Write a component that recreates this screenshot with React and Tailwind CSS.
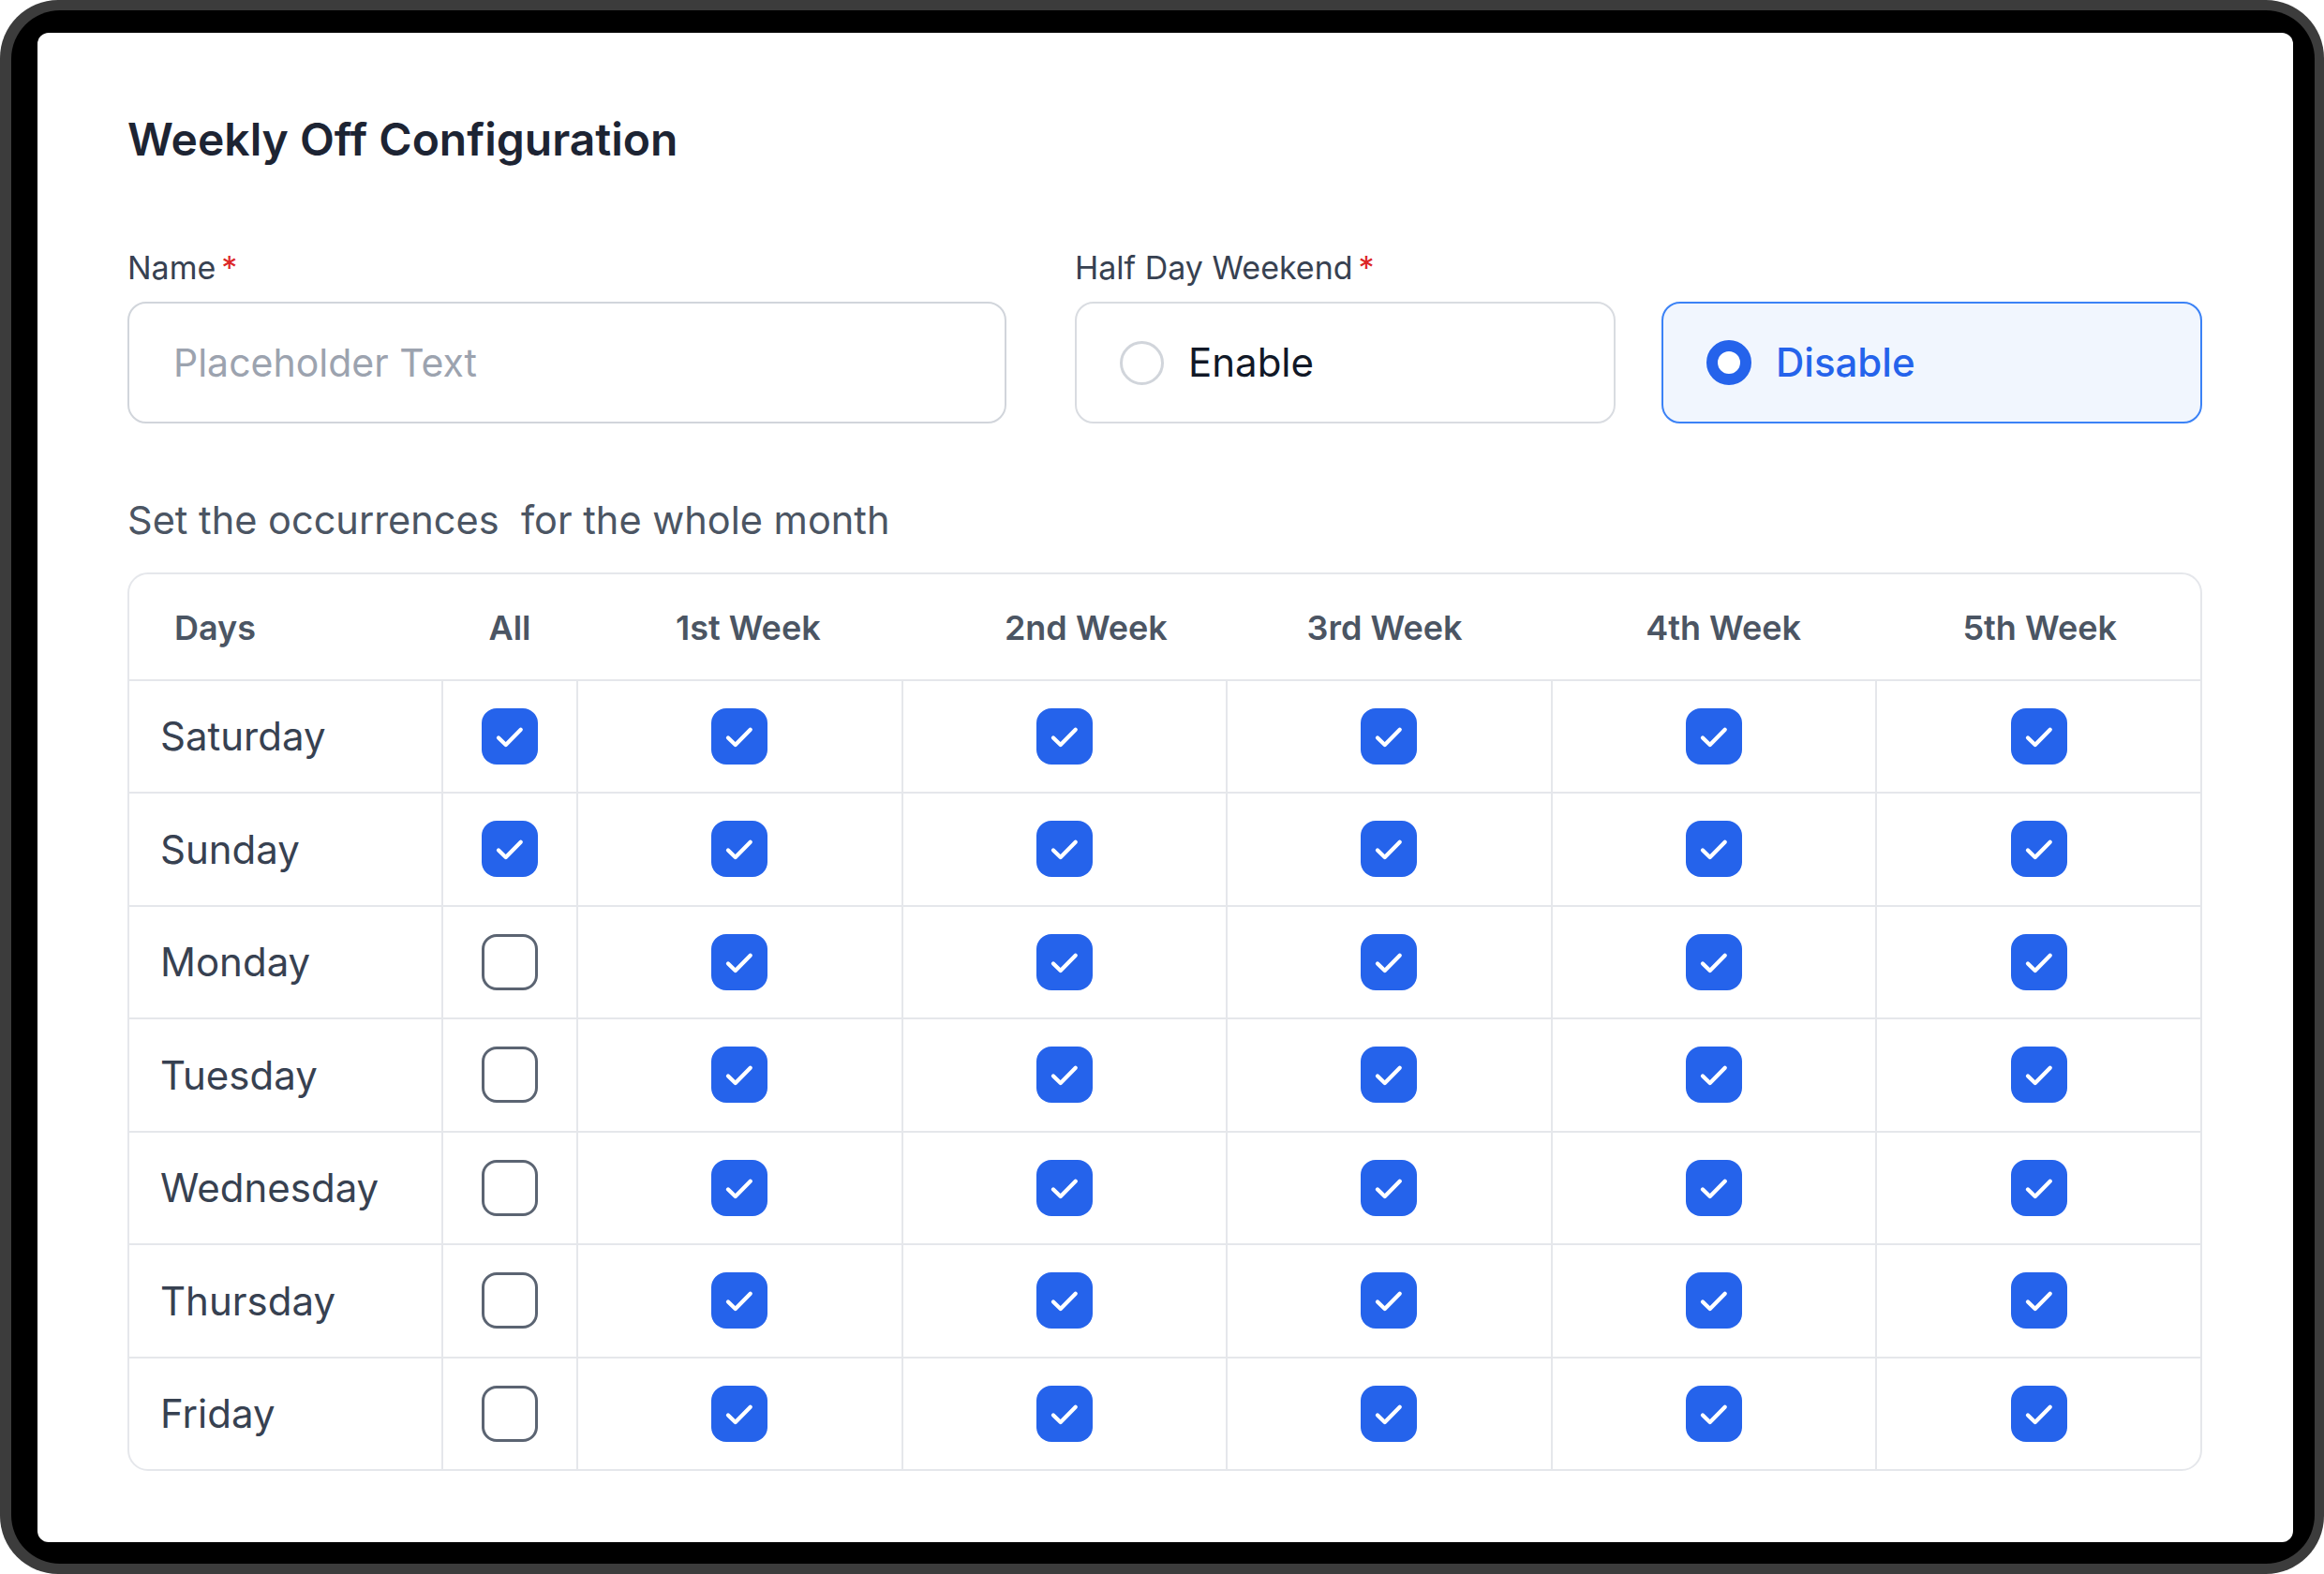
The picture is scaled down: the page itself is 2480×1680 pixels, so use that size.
import React from "react";

const DAYS = ["Saturday", "Sunday", "Monday", "Tuesday", "Wednesday", "Thursday", "Friday"];
const WEEKS = [
  { label: "1st Week", pad: "pl-[20px]" },
  { label: "2nd Week", pad: "pl-[48px]" },
  { label: "3rd Week", pad: "pr-[8px]" },
  { label: "4th Week", pad: "pl-[22px]" },
  { label: "5th Week", pad: "pl-[4px]" },
];
const ALL_ON = { Saturday: true, Sunday: true };

function CheckBox({ checked }) {
  if (!checked) {
    return <div className="w-[60px] h-[60px] rounded-[16px] border-[3px] border-[#5b6472] bg-white" />;
  }
  return (
    <div className="w-[60px] h-[60px] rounded-[16px] bg-[#2563eb] flex items-center justify-center">
      <svg viewBox="0 0 24 24" className="w-[60px] h-[60px]" fill="none">
        <path d="M7.2 12.6l3.1 3 6.4-6.5" stroke="#ffffff" strokeWidth="1.7" strokeLinecap="round" strokeLinejoin="round" />
      </svg>
    </div>
  );
}

function Label({ children }) {
  return (
    <div className="text-[34px] leading-none text-[#374151] flex items-start">
      <span>{children}</span>
      <span className="ml-[6px] text-[#dc2626]">*</span>
    </div>
  );
}

export default function App() {
  return (
    <div className="w-[2480px] h-[1680px] bg-white font-[Inter,sans-serif]">
      <div className="h-full rounded-[62px] bg-[#3c3c3c] pt-[11px] pb-[11px] pl-[12px] pr-[10px]">
        <div className="h-full rounded-[52px] bg-black pt-[24px] pb-[23px] pl-[28px] pr-[23px]">
          <div className="h-full rounded-[12px] bg-white pl-[96px] pr-[97px] pt-[90px]">
            <h1 className="text-[48px] leading-none font-semibold text-[#1d2433]">
              Weekly Off Configuration
            </h1>

            <div className="mt-[96px] grid grid-cols-[938px_1fr] gap-x-[73px]">
              <div>
                <Label>Name</Label>
                <input
                  className="mt-[19px] w-full h-[130px] rounded-[20px] border-2 border-[#d1d5db] px-[47px] text-[41px] text-[#111827] placeholder:text-[#9ca3af] outline-none"
                  placeholder="Placeholder Text"
                />
              </div>
              <div>
                <Label>Half Day Weekend</Label>
                <div className="mt-[19px] grid grid-cols-2 gap-x-[49px]">
                  <div className="h-[130px] rounded-[20px] border-2 border-[#d9dce1] bg-white flex items-center pl-[46px] gap-[26px]">
                    <div className="w-[47px] h-[47px] rounded-full border-[3px] border-[#d1d5db]" />
                    <span className="text-[42px] leading-none text-[#111827]">Enable</span>
                  </div>
                  <div className="h-[130px] rounded-[20px] border-2 border-[#3b82f6] bg-[#f1f6fe] flex items-center pl-[46px] gap-[26px]">
                    <div className="w-[48px] h-[48px] rounded-full border-[12px] border-[#2563eb] bg-white" />
                    <span className="text-[42px] leading-none font-medium text-[#2563eb]">Disable</span>
                  </div>
                </div>
              </div>
            </div>

            <p className="mt-[83px] text-[41.5px] leading-none text-[#4b5563]">
              {"Set the occurrences\u00a0 for the whole month"}
            </p>

            <div className="mt-[34px] rounded-[22px] border-2 border-[#e5e7eb] overflow-hidden">
              <div className="grid grid-cols-[333px_144px_repeat(5,1fr)] h-[112px] pt-[3px] items-center text-[36px] font-semibold text-[#4b5563]">
                <div className="pl-[48px]">Days</div>
                <div className="text-center pl-[2px]">All</div>
                {WEEKS.map((w) => (
                  <div key={w.label} className={`text-center ${w.pad}`}>{w.label}</div>
                ))}
              </div>
              {DAYS.map((d) => (
                <div key={d} className="grid grid-cols-[333px_144px_repeat(5,1fr)] h-[120.5px] border-t-2 border-[#e5e7eb]">
                  <div className="flex items-center pl-[33px] text-[42px] text-[#374151]">{d}</div>
                  <div className="border-l-2 border-[#e5e7eb] flex items-center justify-center">
                    <CheckBox checked={!!ALL_ON[d]} />
                  </div>
                  {WEEKS.map((w) => (
                    <div key={w.label} className="border-l-2 border-[#e5e7eb] flex items-center justify-center">
                      <CheckBox checked />
                    </div>
                  ))}
                </div>
              ))}
            </div>
          </div>
        </div>
      </div>
    </div>
  );
}
